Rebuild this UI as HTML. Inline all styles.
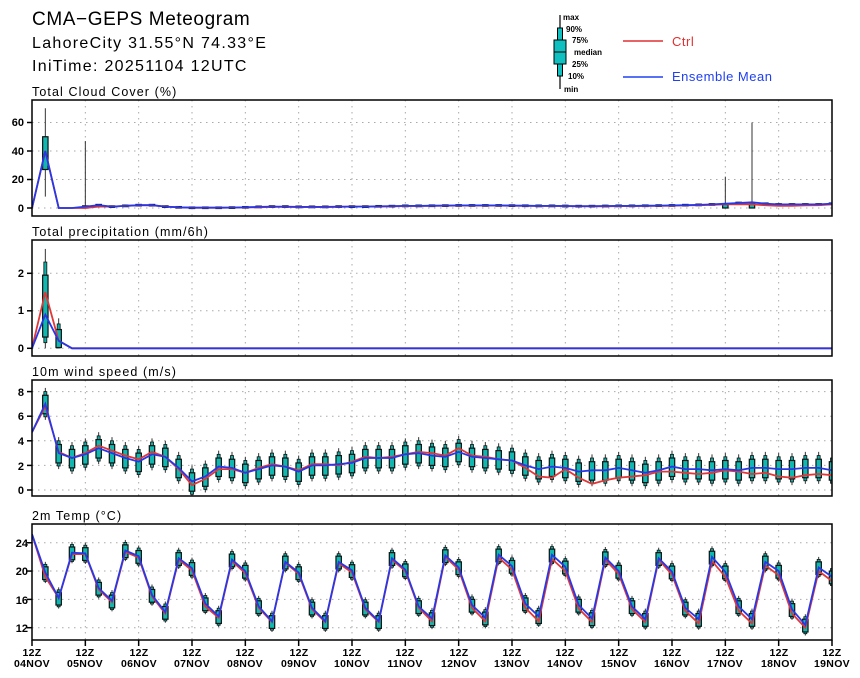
<!DOCTYPE html>
<html><head><meta charset="utf-8"><style>
html,body{margin:0;padding:0;background:#fff;}
svg{display:block;font-family:"Liberation Sans",sans-serif;}
</style></head><body>
<svg id="s" width="860" height="678" viewBox="0 0 860 678" xmlns="http://www.w3.org/2000/svg">
<rect width="860" height="678" fill="#fff"/>
<text x="32" y="25" font-size="19" letter-spacing="0.6" fill="#000">CMA−GEPS Meteogram</text>
<text x="32" y="48" font-size="16" letter-spacing="1.3" fill="#000">LahoreCity 31.55°N 74.33°E</text>
<text x="32" y="71" font-size="16" letter-spacing="1.3" fill="#000">IniTime: 20251104 12UTC</text>
<g font-size="12.5" letter-spacing="1.1">
<text x="32" y="96">Total Cloud Cover (%)</text>
<text x="32" y="236">Total precipitation (mm/6h)</text>
<text x="32" y="376">10m wind speed (m/s)</text>
<text x="32" y="520">2m Temp (°C)</text>
</g>
<!-- legend -->
<line x1="560" y1="15" x2="560" y2="89" stroke="#000" stroke-width="1.2"/>
<rect x="557.5" y="28" width="5" height="48" fill="#10c0c0" stroke="#000" stroke-width="1"/>
<rect x="554" y="40" width="12" height="24" fill="#10c0c0" stroke="#000" stroke-width="1"/>
<line x1="554" y1="52" x2="566" y2="52" stroke="#000"/>
<g font-size="8" font-weight="bold">
<text x="563" y="20">max</text><text x="566" y="32">90%</text><text x="572" y="43">75%</text>
<text x="574" y="55">median</text><text x="572" y="67">25%</text><text x="568" y="79">10%</text><text x="564" y="92">min</text></g>
<line x1="623" y1="41" x2="663" y2="41" stroke="#e03030" stroke-width="1.5"/>
<text x="672" y="46" font-size="13" letter-spacing="0.5" fill="#e03030">Ctrl</text>
<line x1="623" y1="77" x2="663" y2="77" stroke="#2040f0" stroke-width="1.5"/>
<text x="672" y="81" font-size="13" letter-spacing="0.5" fill="#2040f0">Ensemble Mean</text>
<g id="plots"></g>
<g font-size="10.5" font-weight="bold" text-anchor="middle" letter-spacing="0.3">
<text x="32" y="656">12Z</text><text x="32" y="667">04NOV</text>
<text x="85" y="656">12Z</text><text x="85" y="667">05NOV</text>
<text x="139" y="656">12Z</text><text x="139" y="667">06NOV</text>
<text x="192" y="656">12Z</text><text x="192" y="667">07NOV</text>
<text x="245" y="656">12Z</text><text x="245" y="667">08NOV</text>
<text x="299" y="656">12Z</text><text x="299" y="667">09NOV</text>
<text x="352" y="656">12Z</text><text x="352" y="667">10NOV</text>
<text x="405" y="656">12Z</text><text x="405" y="667">11NOV</text>
<text x="459" y="656">12Z</text><text x="459" y="667">12NOV</text>
<text x="512" y="656">12Z</text><text x="512" y="667">13NOV</text>
<text x="565" y="656">12Z</text><text x="565" y="667">14NOV</text>
<text x="619" y="656">12Z</text><text x="619" y="667">15NOV</text>
<text x="672" y="656">12Z</text><text x="672" y="667">16NOV</text>
<text x="725" y="656">12Z</text><text x="725" y="667">17NOV</text>
<text x="779" y="656">12Z</text><text x="779" y="667">18NOV</text>
<text x="832" y="656">12Z</text><text x="832" y="667">19NOV</text>
</g>
<g font-size="11" font-weight="bold" text-anchor="end">
<text x="24" y="126">60</text><text x="24" y="155">40</text><text x="24" y="183">20</text><text x="24" y="212">0</text>
<text x="24" y="277">2</text><text x="24" y="314">1</text><text x="24" y="352">0</text>
<text x="24" y="396">8</text><text x="24" y="420">6</text><text x="24" y="445">4</text><text x="24" y="470">2</text><text x="24" y="494">0</text>
<text x="28" y="547">24</text><text x="28" y="575">20</text><text x="28" y="604">16</text><text x="28" y="632">12</text>
</g>
</svg>
<script>
var NS="http://www.w3.org/2000/svg",G=document.getElementById("plots");
function el(t,a){var e=document.createElementNS(NS,t);for(var k in a)e.setAttribute(k,a[k]);G.appendChild(e);return e;}
var X0=32,W=800,dx=W/60;
var panels=[
 {top:100,y0:208,s:1.425,ticks:[0,20,40,60],
  m:[0,40,0,0,1,2,1,1.5,2,2,1,0.5,0.2,0.2,0.2,0.3,0.5,0.8,1,1,0.8,0.8,0.8,1,1,1,1.2,1.3,1.5,1.5,1.6,1.7,1.8,1.8,1.8,1.8,1.7,1.6,1.5,1.5,1.4,1.3,1.3,1.4,1.5,1.5,1.6,1.7,1.8,2,2.2,2.5,3,3.5,4,3,2.5,2.5,2.5,2.5,3],
  c:[0,40,0,0,0,1,1,1.5,2,2,1,0.5,0.2,0.2,0.2,0.3,0.5,0.5,0.8,0.8,0.6,0.6,0.6,0.8,1,1,1,1.2,1.3,1.4,1.5,1.6,1.7,1.7,1.7,1.7,1.6,1.5,1.4,1.4,1.3,1.2,1.2,1.2,1.3,1.3,1.4,1.5,1.6,1.8,2,2.2,2.5,2.5,2.5,2,1.5,1.5,1.8,2,2.5],
  sp:function(i,v){if(i==1)return[8,27,38,50,70,27,50];if(i==4)return[0,0,0.5,1.5,47,0,1.5];if(i==52)return[0,0,1,2.5,22,0,2.5];if(i==54)return[0,0,1,3,60,0,3];
   if(i<4)return null;return[v-0.6,v-0.5,v,v+0.5,v+0.6,v-0.5,v+0.5];}},
 {top:240,y0:348.3,s:37.5,ticks:[0,1,2],
  m:[0,0.9,0.2,0].concat(new Array(57).fill(0)),
  c:[0,1.5,0.2,0].concat(new Array(57).fill(0)),
  sp:function(i,v){return i==1?[0,0.3,0.9,1.95,2.65]:(i==2?[0,0.02,0.2,0.5,0.8]:null)}},
 {top:380,y0:490,s:12.3,ticks:[0,2,4,6,8],
  m:[4.7,7.0,3.0,2.6,2.9,3.4,3.0,2.6,2.3,2.9,2.7,1.8,0.7,1.1,1.9,1.8,1.4,1.7,2.0,1.9,1.5,2.0,2.0,2.1,2.2,2.6,2.6,2.6,2.9,3.0,2.8,2.7,3.1,2.7,2.6,2.5,2.4,2.0,1.7,1.9,1.8,1.5,1.6,1.6,1.8,1.6,1.4,1.6,1.9,1.7,1.7,1.6,1.7,1.6,1.8,1.8,1.7,1.7,1.8,1.8,1.6],
  c:[4.7,6.8,3.1,2.6,3.0,3.6,3.2,2.8,2.5,3.1,2.7,1.7,0.4,0.9,1.7,1.7,1.4,1.8,2.1,1.9,1.6,2.1,2.1,2.0,2.3,2.7,2.6,2.7,2.9,3.1,3.0,2.8,3.4,2.8,2.7,2.5,2.4,1.8,1.1,1.0,1.7,1.0,0.5,0.8,1.0,1.1,1.2,1.5,1.5,1.4,1.3,1.4,1.6,1.5,1.3,1.4,1.1,1.0,1.2,1.3,1.2],
  sp:function(i,v){return i==0?null:[v-1.3,v-0.8,v,v+0.7,v+1.3]}},
 {top:524,y0:627.7,s:7.08,base:12,ticks:[12,16,20,24],
  m:[25.2,19.8,16.2,22.6,22.5,17.6,15.8,22.9,22.1,16.6,14.2,21.8,20.4,15.4,13.6,21.6,20,15,12.9,21.3,19.8,14.8,12.9,21.3,20.1,14.8,12.9,21.8,20.2,15,13.3,22.2,20.5,15.2,13.4,22.3,20.7,15.4,13.6,22.3,20.6,15.2,13.3,21.9,20.0,15.0,13.2,21.8,19.9,14.8,13.2,22.0,19.9,15.0,13.2,21.3,20.0,14.6,12.4,20.5,19.2],
  c:[25.2,19.2,16.2,22.4,22.4,17.4,15.6,22.7,21.9,16.4,14.0,21.6,20.1,15.0,13.4,21.4,19.7,14.8,12.8,21.2,19.6,14.6,12.8,21.1,19.8,14.6,12.8,21.6,20.0,14.8,12.9,22.0,20.2,14.8,12.9,21.9,20.2,14.8,12.9,21.7,20.0,14.7,12.8,21.6,19.6,14.6,12.8,21.6,19.5,14.4,12.6,21.4,19.2,14.4,12.6,20.8,19.4,14.0,12.0,20.0,18.6],
  sp:function(i,v){return i==0?null:[v-1.5,v-1,v,v+0.8,v+1.5]}}
];
panels.forEach(function(p){
 var b=p.base||0, H=116;
 function Y(v){return p.y0-(v-b)*p.s;}
 var cp="c"+p.top;var cl=el("clipPath",{id:cp});var r=document.createElementNS(NS,"rect");
 r.setAttribute("x",X0);r.setAttribute("y",p.top);r.setAttribute("width",W);r.setAttribute("height",H);cl.appendChild(r);
 for(var k=1;k<15;k++){var x=X0+k*W/15;el("line",{x1:x,y1:p.top,x2:x,y2:p.top+H,stroke:"#aaa","stroke-width":1,"stroke-dasharray":"1.5,4.5"});}
 p.ticks.forEach(function(t){var y=Y(t);el("line",{x1:X0,y1:y,x2:X0+W,y2:y,stroke:"#aaa","stroke-width":1,"stroke-dasharray":"1.5,4.5"});el("line",{x1:X0-5,y1:y,x2:X0,y2:y,stroke:"#000","stroke-width":1.5});});
 var g=el("g",{"clip-path":"url(#"+cp+")"});
 function add(t,a){var e=document.createElementNS(NS,t);for(var k in a)e.setAttribute(k,a[k]);g.appendChild(e);}
 for(var i=0;i<=60;i++){var q=p.sp(i,p.m[i]);if(!q)continue;var x=X0+i*dx;
  var p10=q.length>5?q[5]:q[1]-(q[1]-q[0])*0.5, p90=q.length>5?q[6]:q[3]+(q[4]-q[3])*0.5;
  add("line",{x1:x,y1:Y(q[0]),x2:x,y2:Y(q[4]),stroke:"#333","stroke-width":1});
  add("rect",{x:x-1.5,y:Y(p90),width:3,height:Math.max(1,(p90-p10)*p.s),fill:"#10b0a8",stroke:"#111","stroke-width":0.8});
  add("rect",{x:x-2.7,y:Y(q[3]),width:5.4,height:Math.max(1.5,(q[3]-q[1])*p.s),fill:"#10b8b0",stroke:"#111","stroke-width":1.2});
 }
 function pl(a,c){var d="";for(var i=0;i<=60;i++)d+=(i?"L":"M")+(X0+i*dx).toFixed(1)+","+Y(a[i]).toFixed(1);add("path",{d:d,fill:"none",stroke:c,"stroke-width":1.8});}
 pl(p.c,"#e03838");pl(p.m,"#2838e8");
 el("rect",{x:X0,y:p.top,width:W,height:H,fill:"none",stroke:"#000","stroke-width":1.5});
 if(p.top==524){for(var k=0;k<=15;k++){var x=X0+k*W/15;el("line",{x1:x,y1:p.top+H,x2:x,y2:p.top+H+6,stroke:"#000","stroke-width":1.5});}}
});
</script>
</body></html>
